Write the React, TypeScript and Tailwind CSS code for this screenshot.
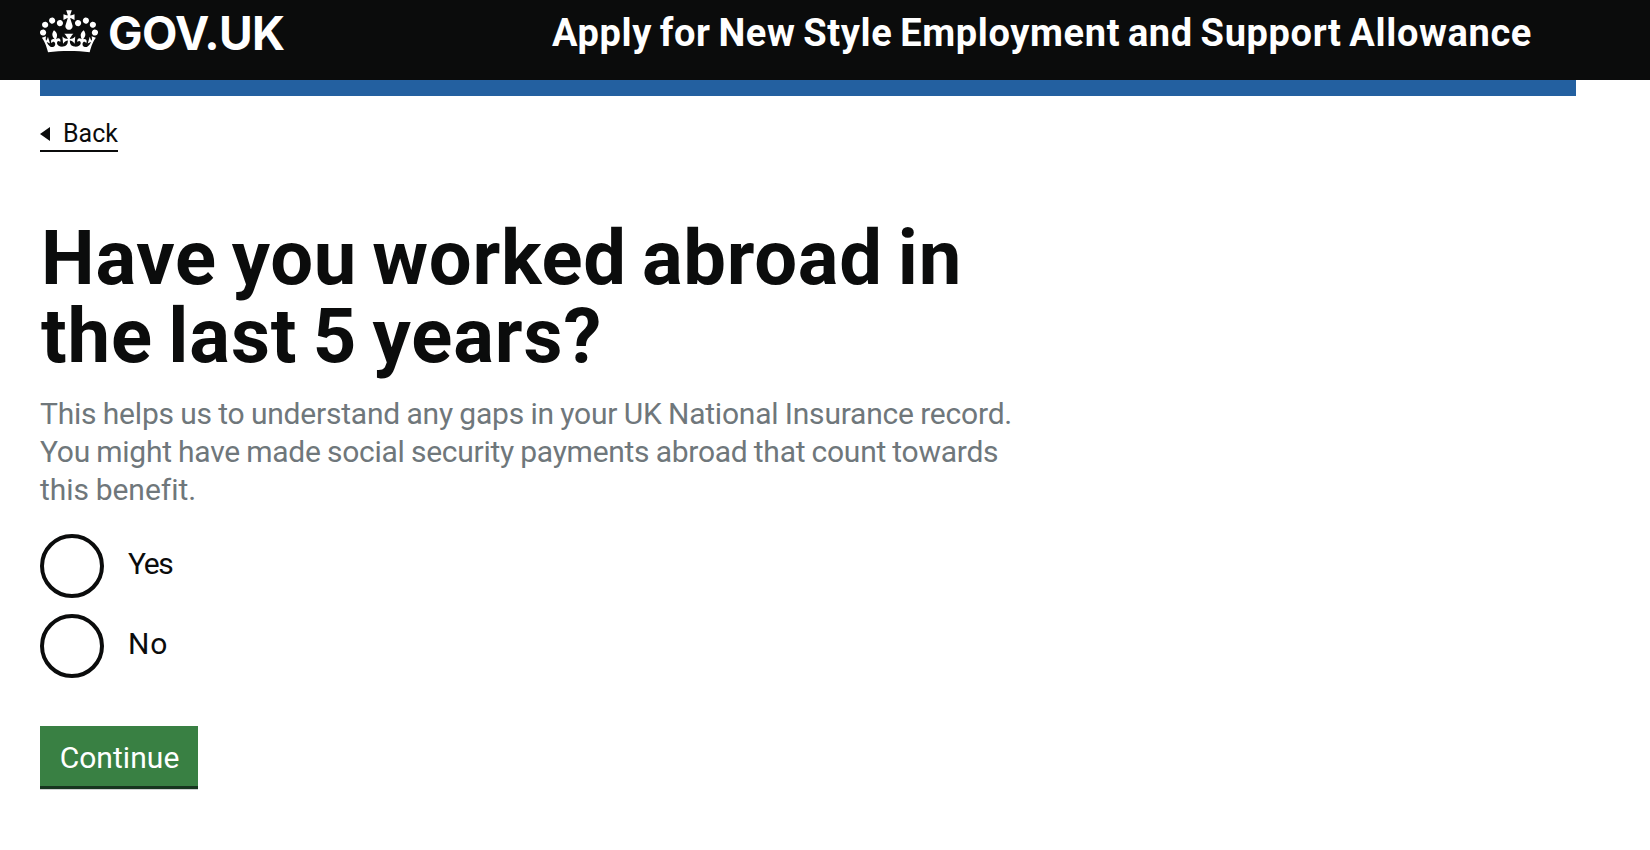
import React from "react";

const CROWN =
  "M25 30.2c3.5 1.5 7.7-.2 9.1-3.7 1.5-3.6-.2-7.8-3.9-9.2-3.6-1.4-7.6.3-9.1 3.9-1.4 3.5.3 7.5 3.9 9zM9 39.5c3.6 1.5 7.8-.2 9.2-3.7 1.5-3.6-.2-7.8-3.9-9.1-3.6-1.5-7.6.2-9.1 3.8-1.4 3.5.3 7.5 3.8 9zM4.4 57.2c3.5 1.5 7.7-.2 9.1-3.8 1.5-3.6-.2-7.7-3.9-9.1-3.5-1.5-7.6.3-9.1 3.8-1.4 3.5.3 7.6 3.9 9.1zm38.3-21.4c3.5 1.5 7.7-.2 9.1-3.8 1.5-3.6-.2-7.7-3.9-9.1-3.6-1.5-7.6.3-9.1 3.8-1.3 3.6.4 7.7 3.9 9.1zm64.4-5.6c-3.6 1.5-7.8-.2-9.1-3.7-1.5-3.6.2-7.8 3.8-9.2 3.6-1.4 7.7.3 9.2 3.9 1.3 3.5-.4 7.5-3.9 9zm15.9 9.3c-3.6 1.5-7.7-.2-9.1-3.7-1.5-3.6.2-7.8 3.7-9.1 3.6-1.5 7.7.2 9.2 3.8 1.5 3.5-.3 7.5-3.8 9zm4.7 17.7c-3.6 1.5-7.8-.2-9.2-3.8-1.5-3.6.2-7.7 3.9-9.1 3.6-1.5 7.7.3 9.2 3.8 1.3 3.5-.4 7.6-3.9 9.1zM89.3 35.8c-3.6 1.5-7.8-.2-9.2-3.8-1.4-3.6.2-7.7 3.9-9.1 3.6-1.5 7.7.3 9.2 3.8 1.4 3.6-.3 7.7-3.9 9.1zM69.7 17.7l8.9 4.7V9.3l-8.9 2.8c-.2-.3-.5-.6-.9-.9L72.4 0H59.6l3.5 11.2c-.3.3-.6.5-.9.9l-8.8-2.8v13.1l8.8-4.7c.3.3.6.7.9.9l-5 15.4v.1c-.2.8-.4 1.6-.4 2.4 0 4.1 3.1 7.5 7 8.1h.2c.3 0 .7.1 1 .1.4 0 .7 0 1-.1h.2c4-.6 7.1-4.1 7.1-8.1 0-.8-.1-1.7-.4-2.4V34l-5.1-15.4c.4-.2.7-.6 1-.9zM66 92.8c16.9 0 32.8 1.1 47.1 3.2 4-16.9 8.9-26.7 14-33.5l-9.6-3.4c1 4.9 1.1 7.2 0 10.2-1.5-1.4-3-4.3-4.2-8.7L108.6 76c2.8-2 5-3.2 7.5-3.3-4.4 9.4-10 11.9-13.6 11.2-4.3-.8-6.3-4.6-5.6-7.9 1-4.7 5.7-5.9 8-.5 4.3-8.7-3-11.4-7.6-8.8 7.1-7.2 7.9-13.5 2.1-21.1-8 6.1-8.1 12.3-4.5 20.8-4.7-5.4-12.1-2.5-9.5 6.2 3.4-5.2 7.9-2 7.2 3.1-.6 4.3-6.4 7.8-13.5 7.2-10.3-.9-10.9-8-11.2-13.8 2.5-.5 7.1 1.8 11 7.3L80.2 60c-4.1 4.4-8 5.3-12.3 5.4 1.4-4.4 8-11.6 8-11.6H55.5s6.4 7.2 7.9 11.6c-4.2-.1-8-1-12.3-5.4l1.4 16.4c3.9-5.5 8.5-7.7 10.9-7.3-.3 5.8-.9 12.8-11.1 13.8-7.2.6-12.9-2.9-13.5-7.2-.7-5 3.8-8.3 7.1-3.1 2.7-8.7-4.6-11.6-9.4-6.2 3.7-8.5 3.6-14.7-4.6-20.8-5.8 7.6-5 13.9 2.2 21.1-4.7-2.6-11.9.1-7.7 8.8 2.3-5.5 7.1-4.2 8.1.5.7 3.3-1.3 7.1-5.7 7.9-3.5.7-9-1.8-13.5-11.2 2.5.1 4.7 1.3 7.5 3.3l-4.7-15.4c-1.2 4.4-2.7 7.2-4.3 8.7-1.1-3-.9-5.3 0-10.2l-9.5 3.4c5 6.9 9.9 16.7 14 33.5 14.8-2.1 30.8-3.2 47.7-3.2z";

function Header() {
  return (
    <header className="h-20 bg-[#0b0c0c] pl-10 text-white">
      <div className="flex h-[66px] items-center whitespace-nowrap font-bold">
        <a href="#" className="flex w-[512px] items-center">
          <svg className="-mt-1 h-[43px] w-[58px]" viewBox="0 0 132 97" fill="currentColor" aria-hidden="true">
            <path fillRule="evenodd" d={CROWN} />
          </svg>
          <span className="ml-[10px] font-['Inter'] text-[46px] leading-[46px] tracking-[-0.6px]">GOV.UK</span>
        </a>
        <a href="#" className="text-[38px] leading-[44px] tracking-[0.63px] [word-spacing:-2.3px]">
          Apply for New Style Employment and Support Allowance
        </a>
      </div>
    </header>
  );
}

function Radio({ label, tracking }: { label: string; tracking: string }) {
  return (
    <label className="flex h-16 items-center">
      <input type="radio" name="abroad" className="size-16 appearance-none rounded-full border-4 border-[#0b0c0c] bg-white" />
      <span className={`-mt-1 ml-6 text-[30px] leading-9 ${tracking}`}>{label}</span>
    </label>
  );
}

export default function App() {
  return (
    <div className="min-h-[850px] bg-white font-['Roboto','Liberation_Sans',sans-serif] text-[#0b0c0c]">
      <Header />
      <div className="ml-10 h-4 w-[1536px] bg-[#2360a0]" />
      <main className="flex flex-col items-start pl-10">
        <a href="#" className="mt-[22px] flex h-[34px] w-[78px] items-center whitespace-nowrap border-b-2 border-[#0b0c0c]">
          <svg className="-mt-px h-[14px] w-[10px]" viewBox="0 0 10 14" aria-hidden="true">
            <path d="M10 0v14L0 7z" fill="currentColor" />
          </svg>
          <span className="ml-[13px] text-[25px] leading-8">Back</span>
        </a>
        <h1 className="mt-[67px] whitespace-nowrap pl-px text-[76px] font-bold leading-[78px] [word-spacing:-4.5px]">
          <span className="block tracking-[0.72px]">Have you worked abroad in</span>
          <span className="block tracking-[0.9px]">the last 5 years?</span>
        </h1>
        <p className="mt-[20px] whitespace-nowrap text-[30px] leading-[38px] text-[#6f777b] [word-spacing:-0.8px]">
          <span className="block tracking-[-0.21px]">This helps us to understand any gaps in your UK National Insurance record.</span>
          <span className="block tracking-[-0.27px]">You might have made social security payments abroad that count towards</span>
          <span className="block tracking-[-0.02px]">this benefit.</span>
        </p>
        <div className="mt-[25px] flex flex-col gap-4">
          <Radio label="Yes" tracking="tracking-[-1.4px]" />
          <Radio label="No" tracking="tracking-[0.8px]" />
        </div>
        <button className="mt-12 h-[63px] w-[158px] border-b-[3px] border-[#17351f] bg-[#398043] pt-[3px] pl-[1px] text-[30px] leading-[57px] tracking-[0.05px] text-white shadow-[0_1px_0_#d0d2d2]">
          Continue
        </button>
      </main>
    </div>
  );
}
